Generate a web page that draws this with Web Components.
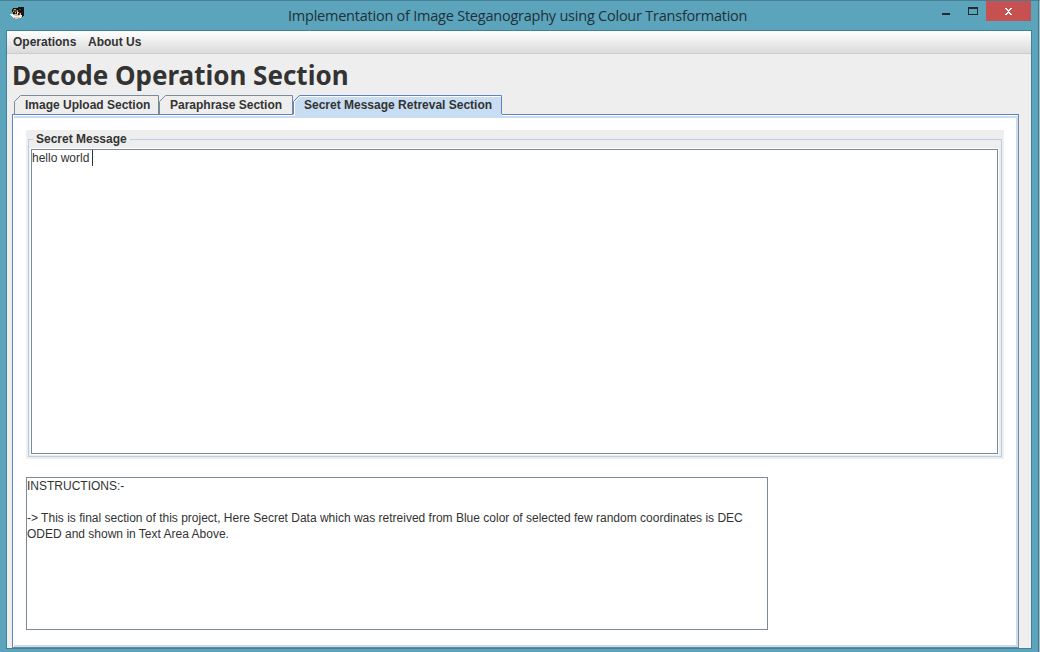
<!DOCTYPE html>
<html lang="en">
<head>
<meta charset="utf-8">
<title>Implementation of Image Steganography using Colour Transformation</title>
<style>
html,body{margin:0;height:100%;overflow:hidden}
body{font:12px "Liberation Sans",Arial,sans-serif;color:#333}
</style>
</head>
<body>
<app-window caption="Implementation of Image Steganography using Colour Transformation">
  <menu-bar>
    <menu-entry style="--w:63px">Operations</menu-entry>
    <menu-entry style="--w:51px">About Us</menu-entry>
  </menu-bar>
  <section-heading>Decode Operation Section</section-heading>
  <tab-pane>
    <tab-label slot="tabs" style="--w:145px">Image Upload Section</tab-label>
    <tab-label slot="tabs" style="--w:134px">Paraphrase Section</tab-label>
    <tab-label slot="tabs" selected style="--w:209px">Secret Message Retreval Section</tab-label>
    <titled-panel caption="Secret Message">
      <text-area caret style="--h:305px">hello world </text-area>
    </titled-panel>
    <text-area style="--h:153px;--w:742px">INSTRUCTIONS:-

-&gt; This is final section of this project, Here Secret Data which was retreived from Blue color of selected few random coordinates is DEC
ODED and shown in Text Area Above.</text-area>
  </tab-pane>
</app-window>
<script>
function define(name, html, setup) {
  customElements.define(name, class extends HTMLElement {
    constructor() {
      super();
      this.attachShadow({mode: 'open'}).innerHTML = html;
    }
    connectedCallback() { if (setup) setup(this, this.shadowRoot); }
  });
}

define('app-icon', `<style>:host{display:block;width:16px;height:16px}svg{display:block}</style>
<svg width="16" height="16" viewBox="0 0 16 16" shape-rendering="crispEdges">
<path fill="#17151a" d="M3 2h5v-1h6v9h-1v1h-2v-1H9V8H3V6H2V3h1z"/>
<path fill="#4d482b" d="M3 3h3v1h2v2H3zM9 3h2v1H9z"/>
<path fill="#b9a93b" d="M4 3h2v1H4zM3 5h1v1H3zM7 4h1v2H7z"/>
<path fill="#d9b697" d="M5 6h4v1h2v3H9v2H8v1H5v-2H3V9h2z"/>
<path fill="#f4eee4" d="M0 8h3v1h2v1h4V9h3v2h-1v1H9v-1H8v1H3v-1H2v-1H1V9H0zM7 6h1v2H7z"/>
<path fill="#8d3230" d="M5 7h1v1H5zM9 7h1v2H9z"/>
<path fill="#17151a" d="M6 6h1v2H6zM8 7h1v2H8zM4 7h1v1H4z"/>
<path fill="#e6c69d" d="M4 11h5v1H8v1H5v-1H4z"/>
</svg>`);

define('window-controls', `<style>
:host{display:flex;align-items:flex-start}
svg{display:block}
.close{background:#c75050;width:45px;height:20px}
</style>
<svg width="54" height="20" shape-rendering="crispEdges"><path fill="#232b30" d="M10 12h8v2h-8z"/><path fill="#232b30" fill-rule="evenodd" d="M36 6h10v8H36zM37 8v5h8V8z"/></svg>
<svg class="close" viewBox="0 0 45 20" shape-rendering="crispEdges"><path fill="#fff" d="M19 7h2v1h1v1h1V8h1V7h2v1h-1v1h-1v1h-1v1h1v1h1v1h1v1h-2v-1h-1v-1h-1v1h-1v1h-2v-1h1v-1h1v-1h1v-1h-1V9h-1V8h-1z"/></svg>`);

define('app-window', `<style>
:host{display:flex;flex-direction:column;box-sizing:border-box;width:1040px;height:652px;background:#5ba4bb;border-top:1px solid #447f91;border-right:1px solid #a9bdc2;box-shadow:inset -1px 0 #417d92}
header{display:grid;grid-template-columns:278px 1fr 109px;height:29px;flex:none}
app-icon{margin:5px 0 0 10px}
.title{margin-top:5px;padding-left:10px;font:14.5px/20px "Open Sans","Noto Sans",sans-serif;color:#1f3038;white-space:pre;letter-spacing:-.23px}
window-controls{margin-left:2px}
.client{height:617px;margin-left:6px;width:1024px;border:1px solid #3f8298;background:#eee;display:flex;flex-direction:column}
</style>
<header><app-icon></app-icon><div class="title"></div><window-controls></window-controls></header>
<div class="client"><slot></slot></div>`,
(el, root) => { root.querySelector('.title').textContent = el.getAttribute('caption'); });

define('menu-bar', `<style>
:host{display:flex;gap:12px;height:22px;padding-left:6px;background:linear-gradient(#fff,#dadada);border-bottom:1px solid #ccc;flex:none}
</style><slot></slot>`);

define('menu-entry', `<style>
:host{display:block;width:var(--w);font-weight:bold;line-height:22px;white-space:nowrap}
</style><slot></slot>`);

define('section-heading', `<style>
:host{display:block;height:41px;padding-left:5px;font:bold 26px/42px "Noto Sans","Open Sans",sans-serif;white-space:nowrap;flex:none}
</style><slot></slot>`);

define('tab-label', `<style>
:host{display:block;position:relative;width:var(--w);height:19px;font-weight:bold;line-height:20px;white-space:nowrap}
svg{position:absolute;left:0;top:0;overflow:visible}
span{position:relative;padding-left:11px}
:host([selected]) span{padding-left:11px}
</style><svg height="22"></svg><span><slot></slot></span>`,
(el, root) => {
  const w = parseInt(el.style.getPropertyValue('--w'));
  const svg = root.querySelector('svg');
  svg.setAttribute('width', w);
  svg.innerHTML = el.hasAttribute('selected')
    ? `<path d="M0 22V6L6 0H${w}V22z" fill="#c8ddf2"/><path d="M.5 19V6.5L6.5 .5H${w - .5}V19" fill="none" stroke="#6382bf"/><path d="M1.5 21V7L7 1.5H${w - 1}" fill="none" stroke="#fff"/>`
    : `<path d="M.5 19V6.5L6.5 .5H${w - .5}V19" fill="none" stroke="#7a8a99"/>`;
});

define('tab-pane', `<style>
:host{display:block;margin-left:5px;width:1007px;flex:none}
.tabs{display:flex;padding-left:2px;height:19px;position:relative;z-index:1}
.body{box-sizing:border-box;height:534px;background:#fff;border:1px solid #6382bf;border-right-color:#7a8a99;border-bottom-color:#6d8797;box-shadow:inset 0 1px #fff,inset 1px 0 #fff,inset -2px -2px #c8ddf2,inset 0 3px #c8ddf2;padding:15px 0 0 13px;display:flex;flex-direction:column;gap:18px;align-items:flex-start}
</style><div class="tabs"><slot name="tabs"></slot></div><div class="body"><slot></slot></div>`);

define('titled-panel', `<style>
:host{display:block;box-sizing:border-box;width:978px;height:329px;background:#eee;padding:2px}
fieldset{box-sizing:border-box;margin:0;min-width:0;height:325px;width:974px;border:1px solid #b8cfe5;padding:2px 2px 3px;box-shadow:none}
legend{margin-left:2px;padding:0 3px;font-weight:bold;line-height:15px;height:15px;white-space:nowrap}
::slotted(text-area){--w:967px}
</style><fieldset><legend></legend><slot></slot></fieldset>`,
(el, root) => { root.querySelector('legend').textContent = el.getAttribute('caption'); });

define('text-area', `<style>
:host{display:block;box-sizing:border-box;width:var(--w);height:var(--h);background:#fff;border:1px solid #7a8a99;line-height:16px;white-space:pre;box-shadow:0 0 0 1px #fff}
i{display:none}
:host([caret]) i{display:inline-block;width:1px;height:16px;background:#333;vertical-align:top;margin-left:-1px}
</style><slot></slot><i></i>`);
</script>
</body>
</html>
